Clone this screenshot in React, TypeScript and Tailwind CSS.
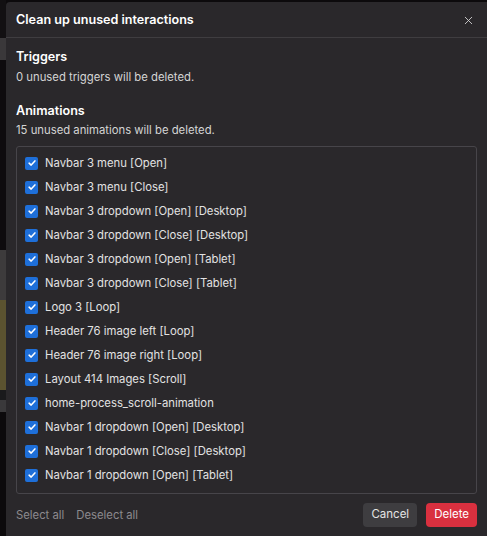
import { X } from 'lucide-react';

const animations = [
  'Navbar 3 menu [Open]',
  'Navbar 3 menu [Close]',
  'Navbar 3 dropdown [Open] [Desktop]',
  'Navbar 3 dropdown [Close] [Desktop]',
  'Navbar 3 dropdown [Open] [Tablet]',
  'Navbar 3 dropdown [Close] [Tablet]',
  'Logo 3 [Loop]',
  'Header 76 image left [Loop]',
  'Header 76 image right [Loop]',
  'Layout 414 Images [Scroll]',
  'home-process_scroll-animation',
  'Navbar 1 dropdown [Open] [Desktop]',
  'Navbar 1 dropdown [Close] [Desktop]',
  'Navbar 1 dropdown [Open] [Tablet]',
  'Navbar 1 dropdown [Close] [Tablet]',
];

function Check() {
  return (
    <span className="flex h-[13px] w-[13px] shrink-0 items-center justify-center rounded-[2px] bg-[#1e6fd9]">
      <svg viewBox="0 0 12 12" className="h-[10px] w-[10px]" fill="none">
        <path d="M2.5 6.2 L5 8.5 L9.5 3.5" stroke="white" strokeWidth="1.8" strokeLinecap="round" strokeLinejoin="round" />
      </svg>
    </span>
  );
}

export default function App() {
  return (
    <div className="flex h-[536px] w-[487px] overflow-hidden bg-[#0c0a0c] font-['Inter',sans-serif]">
      {/* backdrop strip */}
      <div className="flex w-[6px] shrink-0 flex-col">
        <div className="h-[38px] bg-[#121012]" />
        <div className="h-[22px] bg-[#3a383a]" />
        <div className="h-[190px] bg-[#0e0b0e]" />
        <div className="h-[50px] bg-[#3d3b3c]" />
        <div className="h-[90px] bg-[#5b5330]" />
        <div className="h-[10px] bg-[#1a1a1c]" />
        <div className="h-[12px] bg-[#3a393b]" />
        <div className="flex-1 bg-[#0c0a0c]" />
      </div>

      <div className="mt-[2px] flex flex-1 flex-col rounded-tl-[4px] bg-[#2a282b] text-white">
        <div className="flex h-[36px] items-center justify-between border-b border-[#3f3d40] pl-[10px] pr-[12px] pt-[2px]">
          <h1 className="text-[12.6px] font-semibold">Clean up unused interactions</h1>
          <X className="h-[13px] w-[13px] text-[#d8d8d8]" strokeWidth={1.6} />
        </div>

        <div className="flex flex-1 flex-col px-[10px] pt-[10px]">
          <h2 className="text-[12.6px] font-semibold leading-[18px]">Triggers</h2>
          <p className="mt-[3px] text-[11.3px] leading-[16px] text-[#d4d4d4]">0 unused triggers will be deleted.</p>

          <h2 className="mt-[17px] text-[12.6px] font-semibold leading-[18px]">Animations</h2>
          <p className="mt-[2px] text-[11.3px] leading-[16px] text-[#d4d4d4]">15 unused animations will be deleted.</p>

          <div className="mt-[8px] h-[348px] overflow-hidden rounded-[3px] border border-[#47454a] bg-[#2a282b] pl-[8px] pt-[4px]">
            {animations.map((name) => (
              <div key={name} className="flex h-[24px] items-center gap-[7px]">
                <Check />
                <span className="text-[11.3px] text-[#e2e2e2]">{name}</span>
              </div>
            ))}
          </div>

          <div className="flex h-[42px] items-center justify-between">
            <div className="flex gap-[12px] text-[11.3px] text-[#8c8a8e]">
              <span>Select all</span>
              <span>Deselect all</span>
            </div>
            <div className="flex gap-[9px] text-[11.5px]">
              <button className="h-[24px] rounded-[4px] bg-[#3e3d40] px-[8px] text-[#e4e4e4]">Cancel</button>
              <button className="h-[24px] rounded-[4px] bg-[#d9303f] px-[8px] text-white">Delete</button>
            </div>
          </div>
        </div>
      </div>
    </div>
  );
}
